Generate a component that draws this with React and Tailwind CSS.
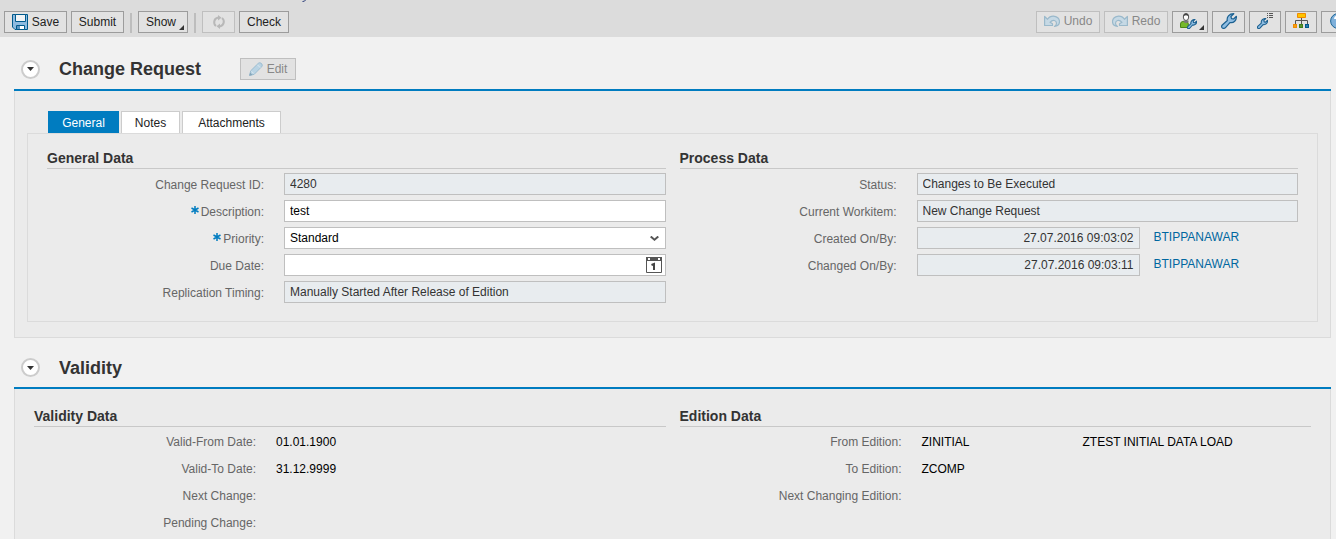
const font = "font-['Liberation_Sans',Arial,sans-serif]";

const cx = (...parts) => parts.filter(Boolean).join(" ");

function ToolButton({ children, label, disabled, menu, className }) {
  return (
    <button
      type="button"
      aria-label={label}
      disabled={disabled}
      className={cx(
        "relative flex h-[22px] shrink-0 items-center justify-center gap-1 border bg-[#e2e2e2] text-xs",
        disabled ? "border-[#bfbfbf] text-[#888888]" : "border-[#9c9c9c] text-[#222222]",
        className
      )}
    >
      {children}
      {menu && (
        <svg aria-hidden="true" className="absolute right-[3px] bottom-[2px]" width="5" height="5" viewBox="0 0 5 5">
          <path d="M5 0V5H0Z" fill="#333" />
        </svg>
      )}
    </button>
  );
}

function Separator() {
  return <div className="mx-0.5 h-5 w-0.5 shrink-0 self-end bg-[#bdbdbd]" />;
}

function SaveIcon() {
  return (
    <svg aria-hidden="true" width="16" height="16" viewBox="0 0 16 16">
      <path d="M.5 .5H15.500V15.500H3L.5 13Z" fill="#8fbbe0" stroke="#005a8c" />
      <path d="M3.500 .5H13.500V7.500H3.500Z" fill="#f1f4f6" stroke="#005a8c" />
      <path d="M4.500 11.500H12.500V15.500H4.500Z" fill="#fff" stroke="#005a8c" />
      <path d="M5 12H8V15H5Z" fill="#5b94c0" />
    </svg>
  );
}

function RefreshIcon() {
  return (
    <svg aria-hidden="true" width="14" height="14" viewBox="0 0 14 14" fill="none" stroke="#b8b8b8" strokeWidth="2">
      <path d="M4 11A4.700 4.700 0 0 1 5.500 2.800H7" />
      <path d="M10 3A4.700 4.700 0 0 1 8.500 11.200H7" />
      <path d="M6 0L9.500 2.800L6 5.600ZM8 8.400L4.500 11.200L8 14Z" fill="#b8b8b8" stroke="none" />
    </svg>
  );
}

function PencilIcon() {
  return (
    <svg aria-hidden="true" width="14" height="14" viewBox="0 0 14 14">
      <path d="M.6 13.400L1.700 8.800L9.300 1.300Q10.800 0 12.500 1.500Q14 3.200 12.700 4.700L5.200 12.300Z" fill="#b9d3e3" stroke="#9bbcd0" />
      <path d="M8.300 2.700L11.300 5.700M2.500 9.300L4.700 11.500" stroke="#e2ebf0" strokeWidth=".8" />
      <path d="M.2 13.800L1.200 10.500L3.500 12.900Z" fill="#86a7ba" />
    </svg>
  );
}

function ArrowShape() {
  return (
    <path
      d="M.6 1.500V10.500H8.500V8.700L6 7.300C9 4 12.500 5.500 12.500 8.200C12.500 9.800 11.700 10.700 10.500 11.500C13.500 11 15.500 9 15.500 6.500C15.500 3.800 13 1.100 9.300 1.100C6.800 1.100 4.800 2.200 3.500 4.300Z"
      fill="#c6d9e5"
      stroke="#9ab9cb"
      strokeWidth="1.200"
      strokeLinejoin="round"
    />
  );
}

function UndoIcon() {
  return (
    <svg aria-hidden="true" width="16" height="13" viewBox="0 0 16 13">
      <ArrowShape />
    </svg>
  );
}

function RedoIcon() {
  return (
    <svg aria-hidden="true" width="16" height="13" viewBox="0 0 16 13">
      <g transform="matrix(-1 0 0 1 16 0)">
        <ArrowShape />
      </g>
    </svg>
  );
}

const wrench =
  "M1 12.300L6.300 7.500C5.500 4 8 .8 12.800 .7L9.900 3.500L10.500 5.600L12.600 6L15.400 3.300C15.700 7.500 12.800 10.300 8.900 9.600L4.300 14.800Q2.600 16 1.200 14.900Q.1 13.600 1 12.300Z";

function WrenchShape({ strokeWidth = 1.2 }) {
  return <path d={wrench} fill="#8fbde2" stroke="#1c6191" strokeWidth={strokeWidth} strokeLinejoin="round" />;
}

function WrenchIcon() {
  return (
    <svg aria-hidden="true" width="16" height="16" viewBox="0 0 16 16">
      <WrenchShape />
    </svg>
  );
}

function UserWrenchIcon() {
  return (
    <svg aria-hidden="true" width="17" height="16" viewBox="0 0 17 16">
      <path d="M.5 14.500V11Q.5 8.500 3 8.500H6Q8.300 8.500 8.300 11V14.500Z" fill="#76b82a" stroke="#4c8318" />
      <path d="M3.500 7.500H8.500V8.500L7 10H5L3.500 8.500Z" fill="#777" />
      <ellipse cx="6" cy="4" rx="2.700" ry="3.500" fill="#fff" stroke="#555" />
      <path d="M3.300 3.800Q3.300 .4 6 .4Q8.700 .4 8.700 3.800Q8 2.200 6 2.200Q4 2.200 3.300 3.800Z" fill="#444" />
      <svg x="7" y="6" width="10" height="10" viewBox="0 0 16 16">
        <WrenchShape strokeWidth={1.8} />
      </svg>
    </svg>
  );
}

function WrenchListIcon() {
  return (
    <svg aria-hidden="true" width="16" height="16" viewBox="0 0 16 16">
      <svg x="0" y="5" width="11" height="11" viewBox="0 0 16 16">
        <WrenchShape strokeWidth={1.600} />
      </svg>
      <path d="M10 .5H11M12 .5H16M10 2.500H11M12 2.500H16M10 4.500H11M12 4.500H16" stroke="#555" />
    </svg>
  );
}

function HierarchyIcon() {
  return (
    <svg aria-hidden="true" width="16" height="16" viewBox="0 0 16 16" fill="none">
      <path d="M8.500 5V11M2.500 11V7.500H14.500V11" stroke="#555" />
      <path d="M4.500 .5H12.500V4.500H4.500Z" fill="#fdc400" stroke="#f08a00" />
      <path d="M.7 11.700H3.300V14.300H.7Z" fill="#fdd835" stroke="#f08a00" strokeWidth="1.400" />
      <path d="M6.700 11.700H9.300V14.300H6.700Z" fill="#9bd04c" stroke="#3f7d1c" strokeWidth="1.400" />
      <path d="M12.700 11.700H15.300V14.300H12.700Z" fill="#9ccbf0" stroke="#005a8c" strokeWidth="1.400" />
    </svg>
  );
}

function HelpIcon() {
  return (
    <svg aria-hidden="true" width="16" height="16" viewBox="0 0 16 16">
      <circle cx="8" cy="8" r="7.400" fill="#7fb0da" stroke="#1f6696" />
      <path d="M5 6Q5 3.500 8 3.500T11 6Q11 7.500 8 8.500V10M8 11.500V13" fill="none" stroke="#fff" strokeWidth="2" />
    </svg>
  );
}

function SectionTitle({ title, children, className }) {
  return (
    <div className={cx("flex items-center border-b-2 border-[#007cc0] pl-[7px]", className)}>
      <button
        type="button"
        aria-label={"Collapse " + title}
        className="flex size-[19px] items-center justify-center rounded-full border-2 border-[#cccccc] bg-white"
      >
        <svg aria-hidden="true" width="7" height="4" viewBox="0 0 7 4">
          <path d="M0 0H7L3.500 4Z" fill="#333" />
        </svg>
      </button>
      <h2 className="ml-[19px] text-lg leading-5 font-bold text-[#333333]">{title}</h2>
      {children}
    </div>
  );
}

function GroupTitle({ children }) {
  return (
    <h3 className="border-b border-[#c8c8c8] pb-0.5 text-sm leading-4 font-bold text-[#333333]">{children}</h3>
  );
}

function Field({ label, id, required, children }) {
  return (
    <div className="flex h-[22px] items-center gap-5">
      <label htmlFor={id} className="flex w-[217px] shrink-0 items-center justify-end gap-0.5 pt-0.5 text-xs text-[#666666]">
        {required && (
          <svg aria-hidden="true" className="mb-1" width="8" height="8" viewBox="0 0 8 8">
            <path d="M4 0V8M.5 2L7.500 6M7.500 2L.5 6" stroke="#007cc0" strokeWidth="1.500" />
          </svg>
        )}
        {label}:
      </label>
      {children}
    </div>
  );
}

const box = "h-[22px] w-full min-w-0 flex-1 border border-[#bfbfbf] px-[5px] text-xs outline-none";
const locked = "bg-[#e8ecef] text-[#333333]";
const open = "bg-white text-black";

function Stamp({ id, value }) {
  return (
    <div className="flex flex-1 items-center gap-3.5">
      <input id={id} readOnly defaultValue={value} className="h-[22px] w-[223px] border border-[#bfbfbf] bg-[#e8ecef] px-[5px] text-right text-xs text-[#333333] outline-none" />
      <a href="#user" className="pb-0.5 text-xs text-[#0067a0]">BTIPPANAWAR</a>
    </div>
  );
}

function Value({ label, value, extra }) {
  return (
    <div className="flex h-[22px] items-center gap-5 text-xs">
      <dt className="w-[222px] shrink-0 text-right text-[#666666]">{label}:</dt>
      <dd className="flex flex-1 text-black">
        <span className="w-[161px]">{value}</span>
        {extra && <span>{extra}</span>}
      </dd>
    </div>
  );
}

function Tab({ active, children, className }) {
  return (
    <button
      type="button"
      role="tab"
      aria-selected={!!active}
      className={cx(
        "h-[22px] border border-b-0 text-xs",
        active ? "border-[#007cc0] bg-[#007cc0] text-white" : "border-[#cccccc] bg-white text-[#222222]",
        className
      )}
    >
      {children}
    </button>
  );
}

export default function App() {
  return (
    <div className={cx("h-screen overflow-hidden bg-[#f1f1f1]", font)}>
      <div className="h-[11px] bg-[#dcdcdc] pl-[302px]">
        <svg aria-hidden="true" className="block" width="4" height="3" viewBox="0 0 4 3">
          <path d="M3.500 0Q3 1.500 .5 1.500" fill="none" stroke="#2c3e7a" />
        </svg>
      </div>
      <header className="flex justify-between overflow-hidden bg-[#dcdcdc] pb-1 pl-1">
        <div className="flex gap-1">
          <ToolButton className="w-[63px]"><SaveIcon />Save</ToolButton>
          <ToolButton className="w-[53px]">Submit</ToolButton>
          <Separator />
          <ToolButton menu className="w-[50px] pr-1">Show</ToolButton>
          <Separator />
          <ToolButton disabled label="Refresh" className="w-[33px]"><RefreshIcon /></ToolButton>
          <ToolButton className="w-[50px]">Check</ToolButton>
        </div>
        <div className="-mr-[18px] flex gap-1">
          <ToolButton disabled className="w-16 pb-0.5"><UndoIcon />Undo</ToolButton>
          <ToolButton disabled className="w-16 pb-0.5"><RedoIcon />Redo</ToolButton>
          <ToolButton menu label="Personalize" className="w-9 pr-1 pb-0.5"><UserWrenchIcon /></ToolButton>
          <ToolButton label="Configure" className="w-[33px] pb-0.5"><WrenchIcon /></ToolButton>
          <ToolButton label="Configure list" className="w-8 pb-0.5"><WrenchListIcon /></ToolButton>
          <ToolButton label="Hierarchy" className="w-8 pb-0.5"><HierarchyIcon /></ToolButton>
          <ToolButton label="Help" className="w-[33px] pb-0.5"><HelpIcon /></ToolButton>
        </div>
      </header>

      <main className="pr-[5px] pl-3.5">
        <section>
          <SectionTitle title="Change Request" className="h-[54px] pt-3">
            <ToolButton disabled className="ml-[39px] w-14"><PencilIcon />Edit</ToolButton>
          </SectionTitle>
          <div className="border border-t-0 border-[#dbdbdb] bg-[#ebebeb] px-3 pt-5 pb-[15px]">
            <div role="tablist" className="flex gap-0.5 pl-[21px]">
              <Tab active className="w-[71px]">General</Tab>
              <Tab className="w-[59px]">Notes</Tab>
              <Tab className="w-[99px]">Attachments</Tab>
            </div>
            <div className="grid grid-cols-2 gap-3.5 border border-[#dbdbdb] px-[19px] pt-4 pb-[18px]">
              <div>
                <GroupTitle>General Data</GroupTitle>
                <div className="flex flex-col gap-[5px] pt-1">
                  <Field label="Change Request ID" id="request-id">
                    <input id="request-id" readOnly defaultValue="4280" className={cx(box, locked)} />
                  </Field>
                  <Field label="Description" id="description" required>
                    <input id="description" defaultValue="test" className={cx(box, open)} />
                  </Field>
                  <Field label="Priority" id="priority" required>
                    <div className="relative flex flex-1">
                      <select id="priority" className={cx(box, open, "appearance-none")}>
                        <option>Standard</option>
                      </select>
                      <svg aria-hidden="true" className="pointer-events-none absolute top-[9px] right-[7px]" width="9" height="5" viewBox="0 0 9 5">
                        <path d="M.7 .5L4.500 3.700L8.300 .5" fill="none" stroke="#555" strokeWidth="2" />
                      </svg>
                    </div>
                  </Field>
                  <Field label="Due Date" id="due-date">
                    <div className="relative flex flex-1">
                      <input id="due-date" className={cx(box, open)} />
                      <button type="button" aria-label="Pick a date" className="absolute top-[3px] right-1">
                        <svg aria-hidden="true" width="16" height="16" viewBox="0 0 16 16">
                          <path d="M.5 .5H15.500V15.500H.5Z" fill="#fff" stroke="#555" />
                          <path d="M0 0H16V4H0Z" fill="#555" />
                          <path d="M2 1H4V3H2ZM12 1H14V3H12Z" fill="#fff" />
                          <path d="M5.500 8L8 7V13" fill="none" stroke="#444" strokeWidth="2" />
                        </svg>
                      </button>
                    </div>
                  </Field>
                  <Field label="Replication Timing" id="replication">
                    <input id="replication" readOnly defaultValue="Manually Started After Release of Edition" className={cx(box, locked)} />
                  </Field>
                </div>
              </div>
              <div>
                <GroupTitle>Process Data</GroupTitle>
                <div className="flex flex-col gap-[5px] pt-1">
                  <Field label="Status" id="status">
                    <input id="status" readOnly defaultValue="Changes to Be Executed" className={cx(box, locked)} />
                  </Field>
                  <Field label="Current Workitem" id="workitem">
                    <input id="workitem" readOnly defaultValue="New Change Request" className={cx(box, locked)} />
                  </Field>
                  <Field label="Created On/By" id="created">
                    <Stamp id="created" value="27.07.2016 09:03:02" />
                  </Field>
                  <Field label="Changed On/By" id="changed">
                    <Stamp id="changed" value="27.07.2016 09:03:11" />
                  </Field>
                </div>
              </div>
            </div>
          </div>
        </section>

        <section>
          <SectionTitle title="Validity" className="h-[51px] pt-2.5" />
          <div className="grid grid-cols-2 gap-3.5 border border-t-0 border-[#dbdbdb] bg-[#ebebeb] px-[19px] pt-[19px] pb-8">
            <div>
              <GroupTitle>Validity Data</GroupTitle>
              <dl className="flex flex-col gap-[5px] pt-1">
                <Value label="Valid-From Date" value="01.01.1900" />
                <Value label="Valid-To Date" value="31.12.9999" />
                <Value label="Next Change" />
                <Value label="Pending Change" />
              </dl>
            </div>
            <div>
              <GroupTitle>Edition Data</GroupTitle>
              <dl className="flex flex-col gap-[5px] pt-1">
                <Value label="From Edition" value="ZINITIAL" extra="ZTEST INITIAL DATA LOAD" />
                <Value label="To Edition" value="ZCOMP" />
                <Value label="Next Changing Edition" />
              </dl>
            </div>
          </div>
        </section>
      </main>
    </div>
  );
}
